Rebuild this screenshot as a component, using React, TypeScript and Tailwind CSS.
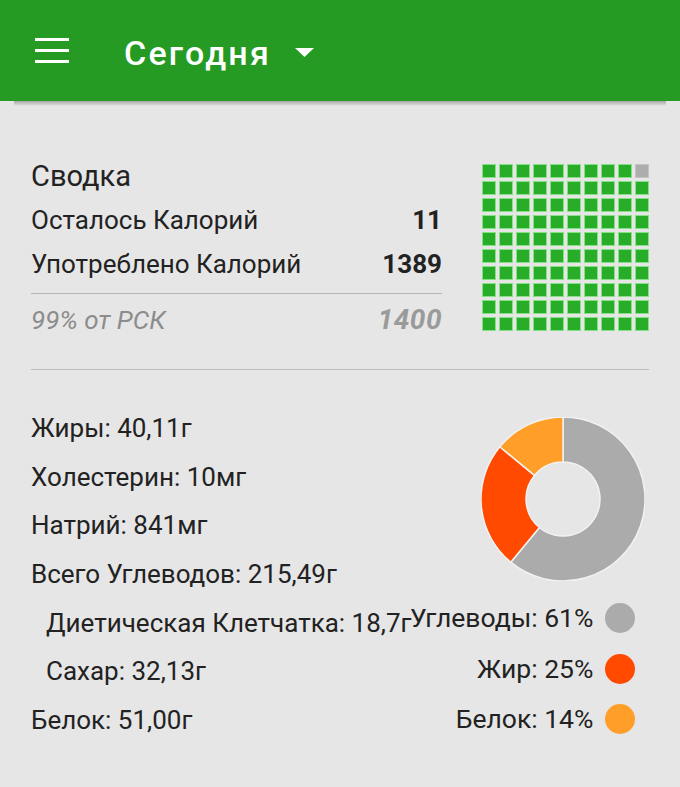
import React from "react";

function Donut() {
  const size = 164;
  const c = size / 2;
  const R = 82;
  const r = 37;
  const segs = [
    { v: 0.61, color: "#ababab" },
    { v: 0.25, color: "#ff4a00" },
    { v: 0.14, color: "#ff9f29" },
  ];
  const pt = (rad: number, deg: number) => {
    const a = (deg * Math.PI) / 180;
    return [c + rad * Math.sin(a), c - rad * Math.cos(a)];
  };
  let acc = 0;
  const paths = segs.map((s, i) => {
    const a0 = acc * 360;
    const a1 = (acc + s.v) * 360;
    acc += s.v;
    const large = a1 - a0 > 180 ? 1 : 0;
    const [x0, y0] = pt(R, a0);
    const [x1, y1] = pt(R, a1);
    const [x2, y2] = pt(r, a1);
    const [x3, y3] = pt(r, a0);
    const d = `M${x0} ${y0} A${R} ${R} 0 ${large} 1 ${x1} ${y1} L${x2} ${y2} A${r} ${r} 0 ${large} 0 ${x3} ${y3} Z`;
    return <path key={i} d={d} fill={s.color} stroke="#f2f2f2" strokeWidth={1.5} />;
  });
  return (
    <svg width={size} height={size} viewBox={`0 0 ${size} ${size}`}>
      {paths}
    </svg>
  );
}

function Waffle() {
  const cells = Array.from({ length: 100 }, (_, i) => i);
  return (
    <div className="grid grid-cols-10 gap-[3px] w-[167px]">
      {cells.map((i) =>
        i === 9 ? (
          <div key={i} className="w-[14px] h-[14px] bg-[#adadad] border border-[#c4c4c4]" />
        ) : (
          <div key={i} className="w-[14px] h-[14px] bg-[#28ad28] border border-[#86e086]" />
        )
      )}
    </div>
  );
}

export default function App() {
  const font = { fontFamily: "Roboto, 'Noto Sans', sans-serif" };
  return (
    <div
      className="relative w-[680px] h-[787px] overflow-hidden bg-[#e6e6e6] text-[#222222]"
      style={font}
    >
      <header className="h-[101px] bg-[#259b24] flex items-center relative">
        <div className="ml-[35px] w-[34px] flex flex-col gap-[8px]">
          <div className="h-[3px] bg-white" />
          <div className="h-[3px] bg-white" />
          <div className="h-[3px] bg-white" />
        </div>
        <span className="ml-[55px] mt-[6px] text-white text-[34px] font-medium tracking-[2.2px]">
          Сегодня
        </span>
        <svg className="ml-[24px] mt-[4px]" width="19" height="9" viewBox="0 0 19 9">
          <path d="M0 0 H19 L9.5 9 Z" fill="white" />
        </svg>
      </header>
      <div className="absolute top-[101px] left-[14px] right-[14px] h-[5px] bg-gradient-to-b from-[rgba(0,0,0,0.28)] to-transparent" />

      <main className="px-[31px] pt-[54px]">
        <section className="flex items-start">
          <div className="w-[412px]">
            <div className="h-[43px] leading-[43px] text-[29px]">Сводка</div>
            <div className="h-[44px] flex items-center justify-between text-[26px]">
              <span>Осталось Калорий</span>
              <span className="font-bold">11</span>
            </div>
            <div className="h-[44px] flex items-center justify-between text-[26px]">
              <span>Употреблено Калорий</span>
              <span className="font-bold">1389</span>
            </div>
            <div className="mt-[7px] border-t border-[#b5b5b5]" />
            <div className="mt-[4px] h-[44px] flex items-center justify-between text-[26px] italic text-[#8c8c8c]">
              <span>99% от РСК</span>
              <span className="font-bold text-[28px] text-[#9a9a9a] tracking-[0.5px]">1400</span>
            </div>
          </div>
          <div className="ml-[40px] mt-[9px]">
            <Waffle />
          </div>
        </section>

        <div className="mt-[27px] border-t border-[#bdbdbd]" />

        <section className="flex mt-[34px]">
          <div className="w-[379px] shrink-0 text-[26px] whitespace-nowrap">
            <div className="h-[48.7px] leading-[48.7px]">Жиры: 40,11г</div>
            <div className="h-[48.7px] leading-[48.7px]">Холестерин: 10мг</div>
            <div className="h-[48.7px] leading-[48.7px]">Натрий: 841мг</div>
            <div className="h-[48.7px] leading-[48.7px]">Всего Углеводов: 215,49г</div>
            <div className="h-[48.7px] leading-[48.7px] pl-[15px]">Диетическая Клетчатка: 18,7г</div>
            <div className="h-[48.7px] leading-[48.7px] pl-[15px]">Сахар: 32,13г</div>
            <div className="h-[48.7px] leading-[48.7px]">Белок: 51,00г</div>
          </div>
          <div className="flex-1 flex flex-col items-end">
            <div className="mt-[13px] mr-[6px]">
              <Donut />
            </div>
            <div className="mt-[12px] w-full text-[26.5px]">
              {[
                { t: "Углеводы: 61%", c: "bg-[#ababab]" },
                { t: "Жир: 25%", c: "bg-[#ff4a00]" },
                { t: "Белок: 14%", c: "bg-[#ff9f29]" },
              ].map((row) => (
                <div key={row.t} className="h-[50.5px] flex items-center justify-end gap-[12px] pr-[16px]">
                  <span className="whitespace-nowrap shrink-0">{row.t}</span>
                  <span className={`w-[30px] h-[30px] rounded-full shrink-0 ${row.c}`} />
                </div>
              ))}
            </div>
          </div>
        </section>
      </main>
    </div>
  );
}
